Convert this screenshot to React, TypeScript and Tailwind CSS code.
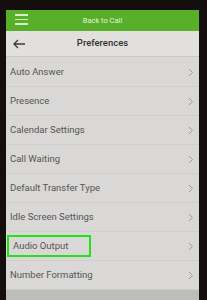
import React from 'react';

const items = [
  'Auto Answer',
  'Presence',
  'Calendar Settings',
  'Call Waiting',
  'Default Transfer Type',
  'Idle Screen Settings',
  'Audio Output',
  'Number Formatting',
];

function Chevron() {
  return (
    <svg width="6" height="9" viewBox="0 0 6 9" className="shrink-0">
      <path d="M1 1l3.5 3.5L1 8" fill="none" stroke="#9a9a9a" strokeWidth="1" />
    </svg>
  );
}

export default function App() {
  return (
    <div className="w-[207px] h-[300px] bg-[#140f0c] pl-[6px] pr-[8px] pt-[10px] overflow-hidden" style={{ fontFamily: 'Roboto, "Liberation Sans", sans-serif' }}>
      <div className="h-full flex flex-col bg-[#d9d8d6]">
        {/* Top bar */}
        <div className="h-[21px] bg-[#58b02a] flex items-center relative">
          <div className="absolute left-[9px] top-[4px] flex flex-col gap-[3px]">
            <div className="w-[13px] h-[1.5px] bg-[#d7efc6]" />
            <div className="w-[13px] h-[1.5px] bg-[#d7efc6]" />
            <div className="w-[13px] h-[1.5px] bg-[#d7efc6]" />
          </div>
          <span className="w-full text-center text-[7.5px] text-[#e2f3d6]">Back to Call</span>
        </div>

        {/* Header */}
        <div className="h-[26px] bg-[#e1e0de] border-b border-[#c9c8c6] flex items-center relative">
          <svg width="14" height="10" viewBox="0 0 14 10" className="absolute left-[6px] top-[8px]">
            <path d="M13 5H2M6 1L2 5l4 4" fill="none" stroke="#3a3a3a" strokeWidth="1.3" />
          </svg>
          <span className="w-full text-center text-[9.5px] font-medium text-[#333]">Preferences</span>
        </div>

        {/* List */}
        <div className="flex flex-col">
          {items.map((item, i) => (
            <div key={item} className={`h-[29px] flex items-center justify-between pl-[4px] pr-[5px] border-b border-[#cfcecc] ${i === 0 ? 'mt-[1px]' : ''}`}>
              {item === 'Audio Output' ? (
                <span className="border-2 border-[#22e01a] h-[22px] w-[84px] -ml-[3px] flex items-center pl-[4px] text-[9.5px] text-[#555]">
                  {item}
                </span>
              ) : (
                <span className="text-[9.5px] text-[#555]">{item}</span>
              )}
              <Chevron />
            </div>
          ))}
        </div>
        <div className="flex-1 bg-[#bdbdbb]" />
      </div>
    </div>
  );
}
